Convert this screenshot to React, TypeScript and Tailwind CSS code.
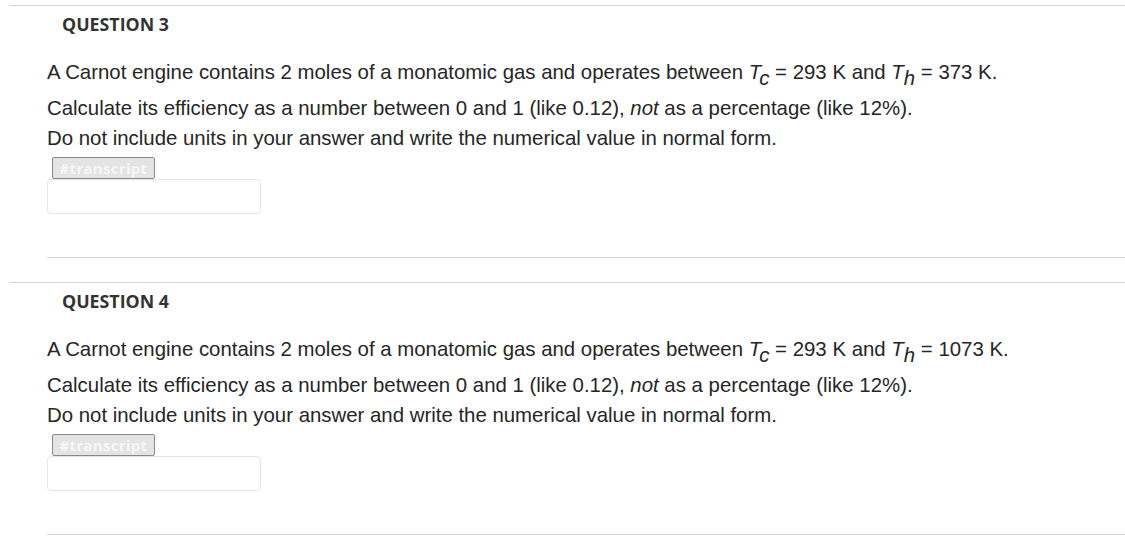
const Question = ({ num, th }: { num: number; th: string }) => (
  <section className="ml-[9px] border-t border-[#d6d6d6]">
    <h2 className="pl-[53px] pt-[7px] text-[17.8px] leading-[22px] font-bold text-[#333] font-['Open_Sans',sans-serif]">
      QUESTION {num}
    </h2>
    <div className="pl-[38px] pt-[22px] text-[20.4px] text-[#262626] font-['Liberation_Sans',Arial,sans-serif]">
      <p className="leading-[30px] mb-[6px] whitespace-nowrap">
        A Carnot engine contains 2 moles of a monatomic gas and operates between{" "}
        <i>T</i>
        <i className="relative top-[6px]">c</i> = 293 K and <i>T</i>
        <i className="relative top-[6px]">h</i> = {th} K.
      </p>
      <p className="leading-[30px] whitespace-nowrap">
        Calculate its efficiency as a number between 0 and 1 (like 0.12), <i>not</i> as a percentage (like 12%).
      </p>
      <p className="leading-[30px] whitespace-nowrap">
        Do not include units in your answer and write the numerical value in normal form.
      </p>
      <button className="ml-[5px] mt-[4px] block h-[22px] w-[103px] rounded-[2px] border border-[#8a8a8a] bg-[#e4e4e4] text-[15px] leading-[18px] font-bold tracking-[0.3px] text-[#f7f7f7] font-['Open_Sans',sans-serif]">
        #transcript
      </button>
      <div className="h-[35px] w-[214px] rounded-[4px] border border-[#e6e6e6]" />
      <div className="mt-[43px] border-t border-[#d6d6d6]" />
    </div>
    <div className="h-[24px]" />
  </section>
);

export default function App() {
  return (
    <div className="h-[541px] w-[1125px] overflow-hidden bg-white pt-[5px]">
      <Question num={3} th="373" />
      <Question num={4} th="1073" />
    </div>
  );
}
